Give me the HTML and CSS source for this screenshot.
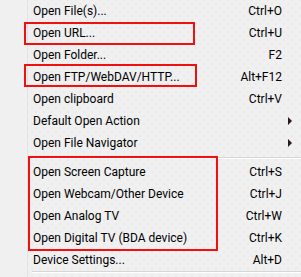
FILE: index.html
```html
<!DOCTYPE html>
<html lang="en">
<head>
  <meta charset="UTF-8" />
  <title>Open menu</title>
  <link rel="stylesheet" href="styles.css">
</head>
<body>
  <div class="menu">
    <div class="gutter"></div>
    <ul class="items">
      <li class="item"><span>Open File(s)...</span><span class="key">Ctrl+O</span></li>
      <li class="item"><span>Open URL...</span><span class="key">Ctrl+U</span></li>
      <li class="item"><span>Open Folder...</span><span class="key">F2</span></li>
      <li class="item"><span>Open FTP/WebDAV/HTTP...</span><span class="key">Alt+F12</span></li>
      <li class="item"><span>Open clipboard</span><span class="key">Ctrl+V</span></li>
      <li class="item sub"><span>Default Open Action</span></li>
      <li class="item sub"><span>Open File Navigator</span></li>
      <li class="sep"></li>
      <li class="item"><span>Open Screen Capture</span><span class="key">Ctrl+S</span></li>
      <li class="item"><span>Open Webcam/Other Device</span><span class="key">Ctrl+J</span></li>
      <li class="item"><span>Open Analog TV</span><span class="key">Ctrl+W</span></li>
      <li class="item"><span>Open Digital TV (BDA device)</span><span class="key">Ctrl+K</span></li>
      <li class="item"><span>Device Settings...</span><span class="key">Alt+D</span></li>
      <li class="sep sep-end"></li>
    </ul>

    <!-- annotation boxes drawn over the menu -->
    <div class="mark mark-url"></div>
    <div class="mark mark-ftp"></div>
    <div class="mark mark-devices"></div>
  </div>
</body>
</html>
```

FILE: styles.css
```css
body { margin: 0; background: #f0f0f0; font-family: Roboto, "Liberation Sans", sans-serif; font-size: 12px; color: #000; }

.menu { position: relative; display: flex; width: 301px; height: 277px; overflow: hidden; }
.gutter { width: 27px; flex: none; border-right: 1px solid #e2e3e3; box-shadow: 1px 0 0 #fff; }

.items {
  list-style: none; margin: 0; padding: 0 0 0 2px; flex: 1;
  background-color: #f0f0f0;
  background-image: radial-gradient(circle, #e2e2e2 0.6px, transparent 0.8px),
                    radial-gradient(circle, #e2e2e2 0.6px, transparent 0.8px);
  background-size: 8px 8px;
  background-position: 0 0, 4px 4px;
}

.item { display: flex; justify-content: space-between; align-items: center; height: 22px; padding: 0 19px 0 3px; position: relative; }
.item.sub::after {
  content: ""; position: absolute; right: 9px; top: 7px;
  border-left: 4px solid #2a1a1a; border-top: 4px solid transparent; border-bottom: 4px solid transparent;
}

.sep { height: 0; margin: 3px 0 2px 2px; border-top: 1px solid #d7d7d7; border-bottom: 1px solid #fff; }
.sep-end { margin-top: 0; }

.mark { position: absolute; border: 2px solid #f01010; }
.mark-url { left: 24px; top: 22px; width: 167px; height: 19px; }
.mark-ftp { left: 24px; top: 64px; width: 169px; height: 19px; }
.mark-devices { left: 28px; top: 156px; width: 186px; height: 91px; }
```
